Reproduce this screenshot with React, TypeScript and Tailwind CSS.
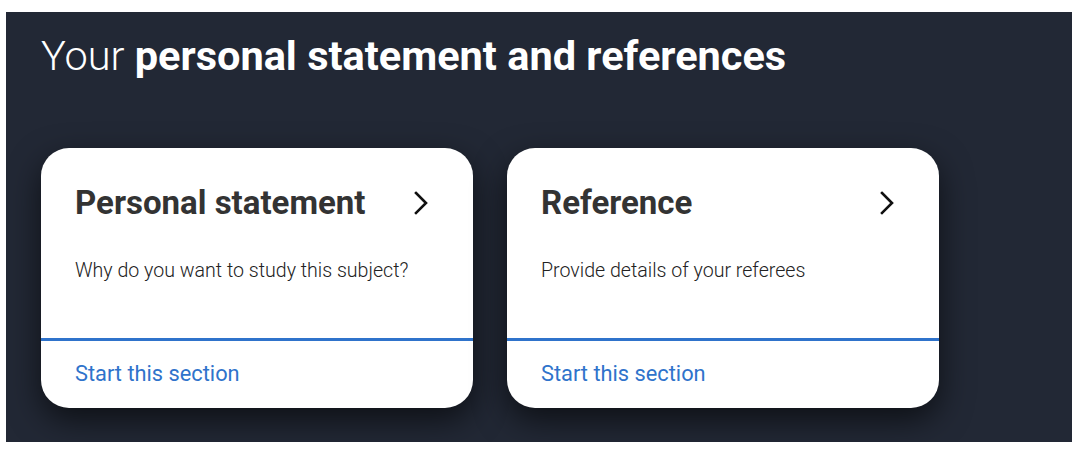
import React from "react";

function Chevron() {
  return (
    <svg width="16" height="24" viewBox="0 0 16 24" fill="none" className="shrink-0">
      <polyline points="3,2 13,12 3,22" stroke="#111" strokeWidth="2.6" strokeLinecap="square" strokeLinejoin="miter" />
    </svg>
  );
}

function Card({ title, desc }: { title: string; desc: string }) {
  return (
    <div className="w-[432px] h-[260px] rounded-[28px] bg-white flex flex-col overflow-hidden shadow-[0_12px_32px_rgba(0,0,0,0.6)]">
      <div className="h-[190px] pl-[34px] pr-[44px] pt-[35px] flex flex-col">
        <div className="flex items-center justify-between h-[40px]">
          <span className="text-[33px] leading-[40px] font-bold text-[#333333]">{title}</span>
          <Chevron />
        </div>
        <p className="mt-[36px] text-[19.6px] leading-[24px] font-light text-[#222222]">{desc}</p>
      </div>
      <div className="border-t-[3px] border-[#2f73cb] flex-1 pl-[34px] pt-[20px]">
        <span className="text-[21.8px] leading-[26px] text-[#2f73cb]">Start this section</span>
      </div>
    </div>
  );
}

export default function App() {
  return (
    <div className="bg-white w-[1078px] h-[454px] px-[6px] py-[12px]" style={{ fontFamily: "Roboto, 'Noto Sans', sans-serif" }}>
      <div className="h-full bg-[#222835] pl-[35px] pt-[20px] flex flex-col overflow-hidden">
        <h1 className="text-[41.5px] leading-[48px] text-white font-light">
          Your <span className="font-bold">personal statement and references</span>
        </h1>
        <div className="mt-[68px] flex gap-[34px]">
          <Card title="Personal statement" desc="Why do you want to study this subject?" />
          <Card title="Reference" desc="Provide details of your referees" />
        </div>
      </div>
    </div>
  );
}
